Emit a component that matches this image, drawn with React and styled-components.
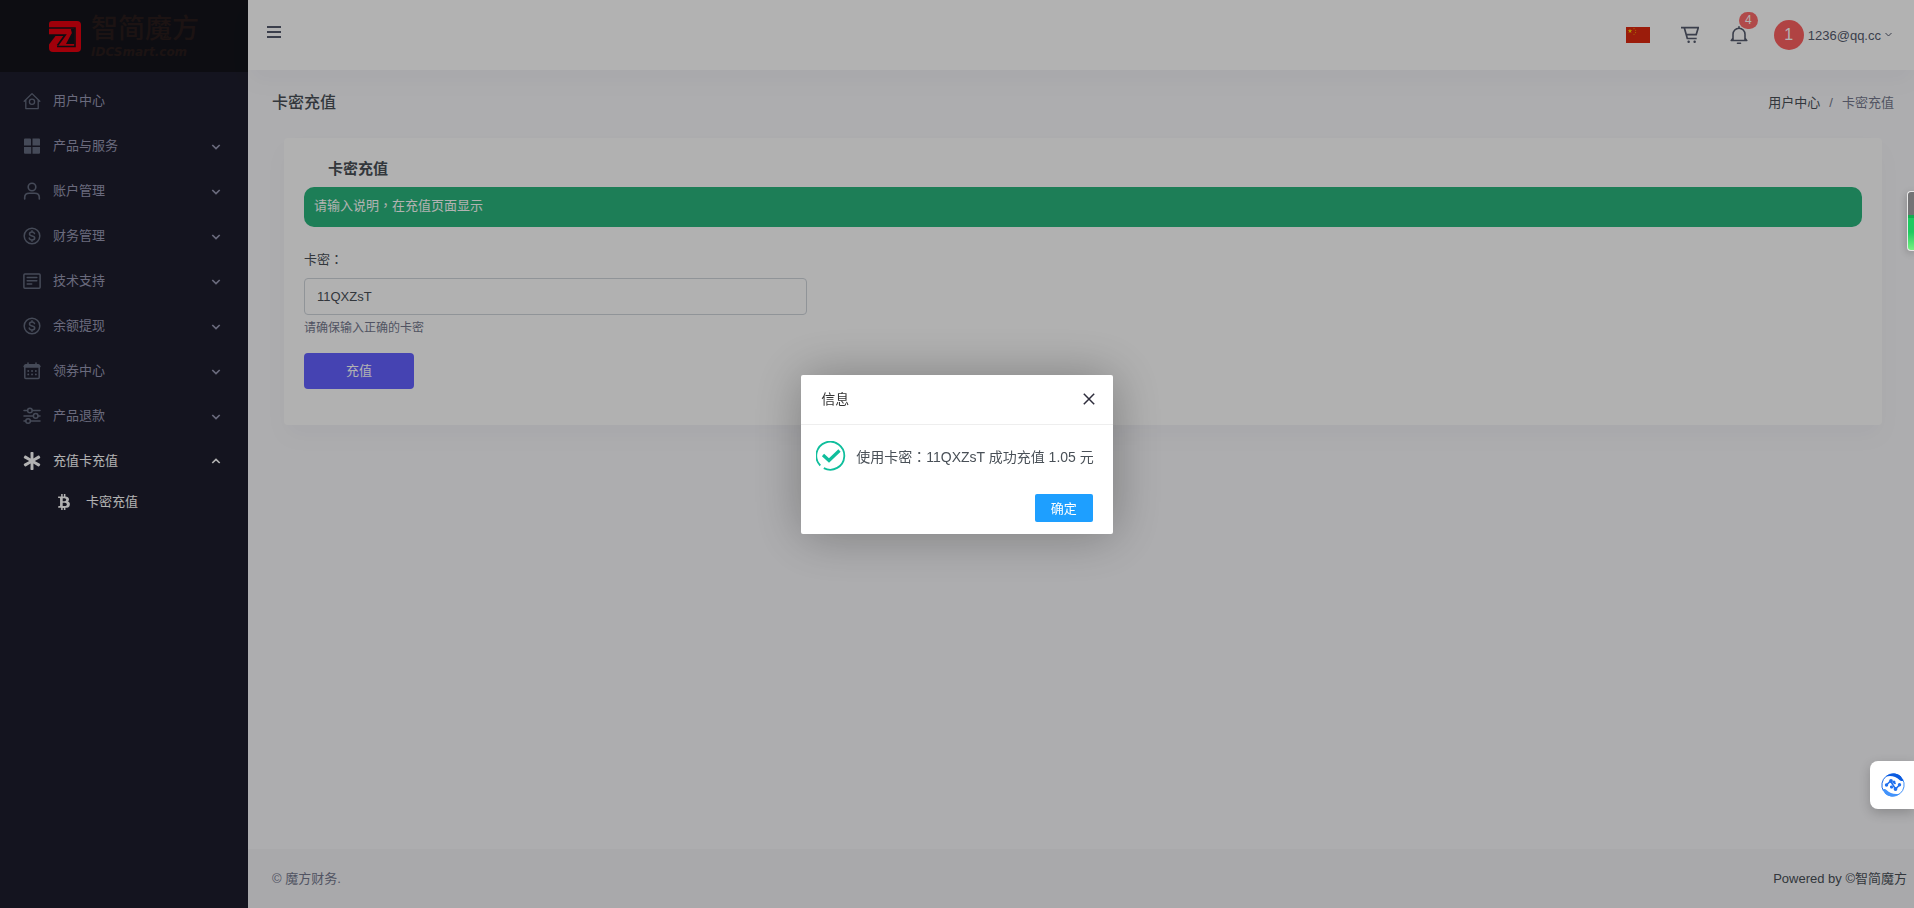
import React, { useState } from 'react';
import styled, { createGlobalStyle } from 'styled-components';
import { FaAsterisk, FaBtc } from 'react-icons/fa';

const GlobalStyle = createGlobalStyle`
  *, *::before, *::after {
    box-sizing: border-box;
  }

  body {
    margin: 0;
    background: #f8f8fb;
    color: #495057;
    font-family: "Liberation Sans", "Noto Sans CJK SC", sans-serif;
    font-size: 13px;
    line-height: 20px;
  }

  button, input {
    font-family: inherit;
  }

  a {
    color: inherit;
    text-decoration: none;
  }
`;

const Shell = styled.div`
  display: flex;
  min-height: 100vh;
`;

const Sidebar = styled.aside`
  flex: 0 0 248px;
  background: #1e1e2d;
`;

const Brand = styled.a`
  display: flex;
  align-items: center;
  justify-content: center;
  gap: 10px;
  height: 72px;
  background: #13141b;
  color: #291c1c;
`;

const BrandText = styled.span`
  display: flex;
  flex-direction: column;
  font-family: "DejaVu Sans", "Noto Sans CJK SC", sans-serif;

  strong {
    font-size: 27px;
    line-height: 32px;
    font-weight: 500;
  }

  em {
    font-size: 12px;
    line-height: 14px;
    font-weight: 700;
  }
`;

const Menu = styled.ul`
  margin: 0;
  padding: 6px 0 0;
  list-style: none;
`;

const MenuButton = styled.button`
  display: flex;
  align-items: center;
  width: 100%;
  height: 45px;
  padding: 0 26px 0 23px;
  gap: 12px;
  border: 0;
  background: none;
  color: ${props => (props.$active ? '#ffffff' : '#9899b4')};
  font-size: 13px;
  line-height: 20px;
  text-align: left;
  cursor: pointer;

  > svg:first-child {
    flex: none;
    color: ${props => (props.$active ? '#ffffff' : '#646b7e')};
  }

  span {
    flex: 1;
  }
`;

const SubMenu = styled.ul`
  margin: 0;
  padding: 0;
  list-style: none;
`;

const SubLink = styled.a`
  display: flex;
  align-items: center;
  gap: 14px;
  height: 38px;
  padding-left: 56px;
  color: #ffffff;
`;

const Main = styled.div`
  flex: 1;
  min-width: 0;
  display: flex;
  flex-direction: column;
`;

const Topbar = styled.header`
  display: flex;
  align-items: center;
  justify-content: space-between;
  height: 70px;
  padding: 0 22px 0 18px;
  background: #ffffff;
  box-shadow: 0 12px 24px rgba(18, 38, 63, 0.03);
`;

const IconButton = styled.button`
  display: flex;
  position: relative;
  padding: 0;
  border: 0;
  background: none;
  color: #555b6d;
  cursor: pointer;
`;

const MenuToggle = styled(IconButton)`
  padding-bottom: 6px;
`;

const Tools = styled.div`
  display: flex;
  align-items: center;
  gap: 31px;
`;

const Badge = styled.span`
  position: absolute;
  top: -14px;
  left: 9px;
  width: 19px;
  height: 17px;
  border-radius: 9px;
  background: #fd6b6b;
  color: #ffffff;
  font-size: 12px;
  line-height: 17px;
  text-align: center;
`;

const Account = styled.button`
  display: flex;
  align-items: center;
  gap: 4px;
  margin-left: -5px;
  padding: 0;
  border: 0;
  background: none;
  color: #555b6d;
  font-size: 13px;
  cursor: pointer;
`;

const Avatar = styled.span`
  width: 30px;
  height: 30px;
  border-radius: 50%;
  background: #fd6161;
  color: #ffffff;
  font-size: 16px;
  line-height: 30px;
`;

const Content = styled.main`
  flex: 1;
  padding: 20px 20px 24px 24px;
`;

const PageHead = styled.div`
  display: flex;
  align-items: center;
  justify-content: space-between;
  height: 26px;
  margin-bottom: 22px;
`;

const PageTitle = styled.h1`
  margin: 0;
  color: #495057;
  font-size: 16px;
  font-weight: 500;
`;

const Breadcrumb = styled.nav`
  display: flex;
  gap: 9px;
  color: #74788d;

  a {
    color: #495057;
  }
`;

const Card = styled.section`
  margin: 0 12px;
  padding: 20px 20px 36px;
  border-radius: 4px;
  background: #fefefe;
  box-shadow: 0 12px 24px rgba(18, 38, 63, 0.03);
`;

const CardTitle = styled.h2`
  margin: 0 0 7px;
  padding-left: 24px;
  color: #495057;
  font-size: 15px;
  line-height: 22px;
  font-weight: 700;
`;

const Notice = styled.div`
  height: 40px;
  padding: 8px 10px;
  border-radius: 10px;
  background: #2ab57d;
  color: #ffffff;
`;

const Form = styled.form`
  display: flex;
  flex-direction: column;
  align-items: flex-start;
  padding-top: 22px;
`;

const Label = styled.label`
  margin-bottom: 8px;
`;

/* a third of a 24px-gutter grid */
const TextInput = styled.input`
  width: calc((100% + 24px) / 3 - 24px);
  min-width: 240px;
  height: 37px;
  padding: 0 12px;
  border: 1px solid #ced4da;
  border-radius: 4px;
  background: #fefefe;
  color: #495057;
  font-size: 13px;
`;

const Hint = styled.small`
  margin: 3px 0 15px;
  color: #74788d;
  font-size: 12px;
`;

const SubmitButton = styled.button`
  width: 110px;
  height: 36px;
  padding: 0 0 4px;
  border: 0;
  border-radius: 4px;
  background: #6361ff;
  color: #ffffff;
  font-size: 13px;
  cursor: pointer;
`;

const Footer = styled.footer`
  display: flex;
  align-items: center;
  justify-content: space-between;
  height: 59px;
  padding: 0 7px 0 24px;
  background: #f2f2f5;
  color: #74788d;

  a {
    color: #495057;
  }
`;

/* full-width punctuation sits in the middle of its cell */
const Mark = styled.span`
  font-family: "Noto Sans CJK TC", sans-serif;
`;

const Shade = styled.div`
  position: fixed;
  inset: 0;
  display: flex;
  align-items: center;
  justify-content: center;
  background: rgba(0, 0, 0, 0.3);
`;

const Dialog = styled.div`
  border-radius: 2px;
  background: #ffffff;
  box-shadow: 1px 1px 50px rgba(0, 0, 0, 0.3);
  font-size: 14px;
`;

const DialogHead = styled.div`
  display: flex;
  align-items: center;
  justify-content: space-between;
  height: 50px;
  padding: 0 18px 0 20px;
  border-bottom: 1px solid #eeeeee;
  color: #333333;
`;

const DialogBody = styled.div`
  display: flex;
  align-items: center;
  gap: 10px;
  height: 63px;
  padding: 0 19px 0 15px;
`;

const DialogFoot = styled.div`
  display: flex;
  justify-content: flex-end;
  padding: 6px 20px 12px;
`;

const ConfirmButton = styled.button`
  height: 28px;
  padding: 0 16px;
  border: 0;
  border-radius: 2px;
  background: #1e9fff;
  color: #ffffff;
  font-size: 13px;
  cursor: pointer;
`;

const AssistButton = styled.button`
  position: fixed;
  right: 0;
  bottom: 99px;
  display: flex;
  align-items: center;
  width: 44px;
  height: 48px;
  padding: 0 0 0 11px;
  border: 0;
  border-radius: 8px 0 0 8px;
  background: #ffffff;
  box-shadow: 0 4px 12px rgba(0, 0, 0, 0.2);
  cursor: pointer;
`;

const Meter = styled.div`
  position: fixed;
  top: 191px;
  right: 0;
  width: 7px;
  height: 60px;
  border: 1px solid #e8e8e8;
  border-right: 0;
  border-radius: 4px 0 0 4px;
  background: linear-gradient(#737375 0 23px, #14ad50 23px 26px, #1fca61 26px 40px, #7df584 59px);
  box-shadow: 0 2px 8px rgba(0, 0, 0, 0.25);
`;

const Glyph = ({ size = 18, width = 1, children }) => (
  <svg
    width={size}
    height={size}
    viewBox="0 0 18 18"
    fill="none"
    stroke="currentColor"
    strokeWidth={width}
    strokeLinecap="round"
    strokeLinejoin="round"
    aria-hidden="true"
  >
    {children}
  </svg>
);

const HomeIcon = () => (
  <Glyph width={1.3}>
    <path d="M1.2 9.2 9 1.6l7.8 7.6M2.8 8v8.6h12.4V8" />
    <circle cx="9" cy="9.8" r="2.6" />
  </Glyph>
);

const GridIcon = () => (
  <Glyph>
    <path fill="currentColor" stroke="none" d="M2 1.500h5a1 1 0 0 1 1 1v6H1v-6a1 1 0 0 1 1-1zM10 1.500h6a1 1 0 0 1 1 1v6H9.500zM1 10h7.200v6.800H2a1 1 0 0 1-1-1zM9.500 10H17v5.800a1 1 0 0 1-1 1H9.500zM9.500 1.500h1v7h-1z" />
  </Glyph>
);

const UserIcon = () => (
  <Glyph width={1.6}>
    <circle cx="9" cy="5" r="3.8" />
    <path d="M1.7 17v-1.500c0-2.600 2-4.200 4.500-4.200h5.600c2.500 0 4.500 1.600 4.500 4.200V17" />
  </Glyph>
);

const DollarIcon = () => (
  <Glyph width={1.5}>
    <circle cx="9" cy="9" r="7.8" />
    <path d="M11.5 6.600c-.3-1-1.300-1.500-2.500-1.500-1.500 0-2.500.7-2.500 1.900 0 2.900 5.200 1.200 5.200 4 0 1.200-1.200 1.900-2.700 1.900s-2.500-.7-2.700-1.800M9 3.800v1.300M9 12.900v1.300" />
  </Glyph>
);

const TicketIcon = () => (
  <Glyph width={1.5}>
    <rect x="0.9" y="2" width="16.2" height="14.2" rx="1" />
    <path d="M4.2 5.500h9.600M4.200 8.700h9.600M4.200 12h4.500" />
  </Glyph>
);

const CalendarIcon = () => (
  <Glyph width={1.5}>
    <rect x="1.8" y="2.800" width="14.4" height="13.800" rx="1" />
    <path d="M2 4.300h14" strokeWidth="3" />
    <path d="M5 1v2M13 1v2" />
    <path d="M5.200 9h.1M9 9h.1M12.800 9h.1M5.200 12.400h.1M9 12.400h.1M12.800 12.400h.1" strokeWidth="1.8" />
  </Glyph>
);

const SlidersIcon = () => (
  <Glyph width={1.5}>
    <path d="M1 3.500h3.500M9.300 3.500H17M1 9h9.300M15.100 9H17M1 14h1.700M7.500 14H17" />
    <circle cx="6.900" cy="3.500" r="2.300" />
    <circle cx="12.700" cy="8.900" r="2.300" />
    <circle cx="5.100" cy="14" r="2.300" />
  </Glyph>
);

const Chevron = ({ up }) => (
  <svg width="12" height="12" viewBox="0 0 12 12" fill="none" stroke="currentColor" strokeWidth="1.7" aria-hidden="true">
    <path d={up ? 'M2.300 8 6 4.500 9.700 8' : 'M2.300 5 6 8.500 9.700 5'} />
  </svg>
);

const BrandMark = () => (
  <svg width="32" height="31" viewBox="0 0 32 31" aria-hidden="true">
    <path fill="#e5000f" d="M3 0h25a4 4 0 0 1 4 4v23a4 4 0 0 1-4 4H4a4 4 0 0 1-4-4V3a3 3 0 0 1 3-3z" />
    <g fill="none" stroke="#13141b">
      <path d="M0 7h26v18.500H8" strokeWidth="1.600" />
      <path d="M22 13.500 17 23h8.500V8c0 0-4-1-3.500 1s1.500 3 0 4.500z" fill="#13141b" stroke="none" />
      <path d="M0 14.200h16L8.500 24.500" strokeWidth="1.800" />
      <path d="M0 15h6.500L0 23.500z" fill="#13141b" stroke="none" />
    </g>
  </svg>
);

const CartIcon = () => (
  <Glyph width={1.700}>
    <path d="M0 1.700h17.300l-2.100 6.900H5.200M3.300 1.700l3 10.800h9.400" strokeLinecap="butt" strokeLinejoin="miter" />
    <path d="M7.600 15.800h.1M13.600 15.800h.1" strokeWidth="2.400" />
  </Glyph>
);

const BellIcon = () => (
  <Glyph width={1.600}>
    <path d="M9 .8v1.300M1.200 14.500h15.600M3 14.300V8.200a6 6 0 0 1 12 0v6.100M1.500 14.200l1.500-2M16.500 14.200l-1.500-2M7.500 17.200h3" />
  </Glyph>
);

const Flag = () => (
  <svg width="24" height="16" viewBox="0 0 30 20" aria-hidden="true">
    <path fill="#de2910" d="M0 0h30v20H0z" />
    <path fill="#ffde00" d="m5 2 .7 2.100h2.200L6.100 5.400l.7 2.100L5 6.200 3.200 7.500l.7-2.100-1.800-1.300h2.200z" />
    <g fill="#ffde00" fillOpacity="0.7">
      <circle cx="10" cy="2" r=".7" />
      <circle cx="12" cy="4" r=".7" />
      <circle cx="12" cy="7" r=".7" />
      <circle cx="10" cy="9" r=".7" />
    </g>
  </svg>
);

const SuccessIcon = () => (
  <svg width="30" height="30" viewBox="0 0 30 30" fill="none" stroke="#0fbe9c" aria-hidden="true">
    <path d="M4.300 24.500A14 14 0 1 1 7.800 27.100" strokeWidth="1.800" />
    <path d="m7 14 6 5.500L23.500 9.500" strokeWidth="3.200" />
  </svg>
);

const AssistIcon = () => (
  <svg width="24" height="24" viewBox="0 0 24 24" fill="none" aria-hidden="true">
    <path d="M2.500 18A11.300 11.300 0 0 1 20 4" stroke="#1769e8" strokeWidth="1" />
    <path d="M21.500 6A11.300 11.300 0 0 1 4 20" stroke="#3e8ff8" strokeWidth="1" />
    <path d="M5 3.500C11-2 20 .5 22.300 7.500c-1 .9-2.800.8-3.800-.5C15 3.500 10 2 5 3.500z" fill="#0b5be0" />
    <path d="M19 20.500C13 26 4 23.500 1.700 16.500c1-.9 2.800-.8 3.800.5C9 20.500 14 22 19 20.500z" fill="#4393fb" />
    <path d="M5.500 12 9.500 8l5 8 4.500-4.500M12.500 9l2 2M9.500 13l2 2" stroke="#1f70ee" strokeWidth="1.600" />
    <g fill="#1f70ee">
      <circle cx="5.500" cy="12" r="1.700" />
      <circle cx="10" cy="8" r="1.900" />
      <circle cx="13" cy="9" r="1.500" />
      <circle cx="10.500" cy="14" r="1.500" />
      <circle cx="14.500" cy="16" r="1.900" />
      <circle cx="18.500" cy="11.800" r="1.700" />
    </g>
  </svg>
);

const menuItems = [
  { label: '用户中心', icon: <HomeIcon />, leaf: true },
  { label: '产品与服务', icon: <GridIcon /> },
  { label: '账户管理', icon: <UserIcon /> },
  { label: '财务管理', icon: <DollarIcon /> },
  { label: '技术支持', icon: <TicketIcon /> },
  { label: '余额提现', icon: <DollarIcon /> },
  { label: '领券中心', icon: <CalendarIcon /> },
  { label: '产品退款', icon: <SlidersIcon /> },
  {
    label: '充值卡充值',
    icon: <FaAsterisk size={18} />,
    children: [{ label: '卡密充值', icon: <FaBtc size={16} /> }]
  }
];

const App = () => {
  const [code, setCode] = useState('11QXZsT');
  const [showDialog, setShowDialog] = useState(true);

  const handleSubmit = event => {
    event.preventDefault();
    setShowDialog(true);
  };

  return (
    <>
      <GlobalStyle />
      <Shell>
        <Sidebar>
          <Brand href="#home">
            <BrandMark />
            <BrandText>
              <strong>智简魔方</strong>
              <em>IDCSmart.com</em>
            </BrandText>
          </Brand>
          <Menu>
            {menuItems.map(item => (
              <li key={item.label}>
                <MenuButton
                  as={item.leaf ? 'a' : 'button'}
                  href={item.leaf ? '#home' : undefined}
                  $active={Boolean(item.children)}
                >
                  {item.icon}
                  <span>{item.label}</span>
                  {!item.leaf && <Chevron up={Boolean(item.children)} />}
                </MenuButton>
                {item.children && (
                  <SubMenu>
                    {item.children.map(child => (
                      <li key={child.label}>
                        <SubLink href="#card">
                          {child.icon}
                          {child.label}
                        </SubLink>
                      </li>
                    ))}
                  </SubMenu>
                )}
              </li>
            ))}
          </Menu>
        </Sidebar>

        <Main>
          <Topbar>
            <MenuToggle aria-label="菜单">
              <svg width="16" height="14" viewBox="0 0 16 14" stroke="currentColor" strokeWidth="2">
                <path d="M1 2h14M1 7h14M1 12h14" />
              </svg>
            </MenuToggle>
            <Tools>
              <IconButton aria-label="语言">
                <Flag />
              </IconButton>
              <IconButton aria-label="购物车">
                <CartIcon />
              </IconButton>
              <IconButton aria-label="消息">
                <BellIcon />
                <Badge>4</Badge>
              </IconButton>
              <Account>
                <Avatar>1</Avatar>
                1236@qq.cc
                <svg width="7" height="6" viewBox="0 0 7 6" fill="none" stroke="currentColor">
                  <path d="M.5 1 3.500 4l3-3" />
                </svg>
              </Account>
            </Tools>
          </Topbar>

          <Content>
            <PageHead>
              <PageTitle>卡密充值</PageTitle>
              <Breadcrumb>
                <a href="#home">用户中心</a>
                <span>/</span>
                <span>卡密充值</span>
              </Breadcrumb>
            </PageHead>

            <Card>
              <CardTitle>卡密充值</CardTitle>
              <Notice>
                请输入说明<Mark>，</Mark>在充值页面显示
              </Notice>
              <Form onSubmit={handleSubmit}>
                <Label htmlFor="code">
                  卡密<Mark>：</Mark>
                </Label>
                <TextInput id="code" value={code} onChange={event => setCode(event.target.value)} />
                <Hint>请确保输入正确的卡密</Hint>
                <SubmitButton type="submit">充值</SubmitButton>
              </Form>
            </Card>
          </Content>

          <Footer>
            <span>© 魔方财务.</span>
            <a href="#powered">Powered by ©智简魔方</a>
          </Footer>
        </Main>
      </Shell>

      {showDialog && (
        <Shade>
          <Dialog role="dialog" aria-labelledby="dialog-title">
            <DialogHead>
              <span id="dialog-title">信息</span>
              <IconButton aria-label="关闭" onClick={() => setShowDialog(false)}>
                <svg width="12" height="12" viewBox="0 0 12 12" stroke="#2e2d3c" strokeWidth="1.500">
                  <path d="m.8.8 10.400 10.400M11.200.8.800 11.200" />
                </svg>
              </IconButton>
            </DialogHead>
            <DialogBody>
              <SuccessIcon />
              <span>
                使用卡密<Mark>：</Mark>11QXZsT 成功充值 1.05 元
              </span>
            </DialogBody>
            <DialogFoot>
              <ConfirmButton onClick={() => setShowDialog(false)}>确定</ConfirmButton>
            </DialogFoot>
          </Dialog>
        </Shade>
      )}

      <Meter />
      <AssistButton aria-label="助手">
        <AssistIcon />
      </AssistButton>
    </>
  );
};

export default App;
